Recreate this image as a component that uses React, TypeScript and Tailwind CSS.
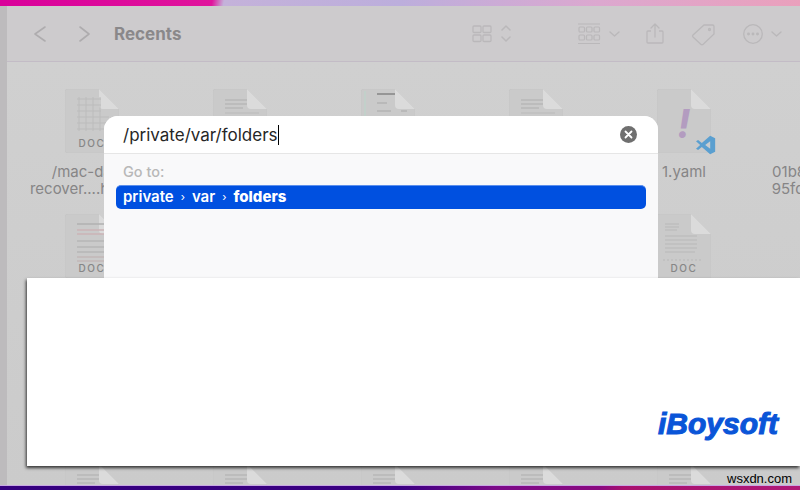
import React from "react";

type Kind = "table" | "lines" | "form" | "red" | "yaml" | "note";

const sans = "font-['Inter','Liberation_Sans',sans-serif]";

function Lines({ kind }: { kind: Kind }) {
  if (kind === "table") {
    return (
      <g stroke="#bcbcbc" strokeWidth="1" fill="none">
        <path d="M12 10H36M12 16H36M12 22H36M12 28H44M12 34H44M12 40H44" />
        <path d="M14 8V42M21 8V42M28 8V42M35 8V42" />
      </g>
    );
  }
  if (kind === "form") {
    return (
      <g fill="none">
        <path d="M4 2V40" stroke="#c2d0ca" strokeWidth="2" />
        <path d="M16 5H34" stroke="#969696" strokeWidth="2" />
        <path d="M16 14H26M16 22H30M40 22H46" stroke="#b4b4b4" strokeWidth="1.5" />
      </g>
    );
  }
  if (kind === "red") {
    return (
      <g fill="none" strokeWidth="1.5">
        <path d="M12 10H40" stroke="#b0b0b0" />
        <path d="M12 16H44M12 20H44" stroke="#cbb4b6" />
        <path d="M12 27H44M12 33H44M12 38H44" stroke="#b6b6b6" />
        <path d="M12 43H44M12 47H44" stroke="#c2b8b8" />
      </g>
    );
  }
  if (kind === "note") {
    return (
      <g fill="none" strokeWidth="1" stroke="#b8b8b8">
        <path d="M8 10H22M8 13H22M8 16H20M8 22H40M8 26H40M8 30H40M8 34H40M8 38H38" />
        <path d="M6 46H44" strokeDasharray="2 2" />
      </g>
    );
  }
  return (
    <g fill="none" strokeWidth="1.5" stroke="#b8b8b8">
      <path d="M12 11H34M12 15H34M12 19H30" />
      <path d="M12 24H46M12 28H46M12 33H46M12 37H40" stroke="#c0c0c0" />
    </g>
  );
}

function FileIcon({ kind }: { kind: Kind }) {
  return (
    <div className="relative h-[64px] w-[54px]">
      <svg viewBox="0 0 54 64" className="h-[64px] w-[54px]">
        <path d="M3 0H34L54 20V64H3Q0 64 0 61V3Q0 0 3 0Z" fill="#cacaca" stroke="#c6c6c6" />
        <path d="M34 0V16Q34 20 38 20H54Z" fill="#dbdbdb" />
        {kind !== "yaml" && <Lines kind={kind} />}
        {kind !== "yaml" && (
          <text x="27" y="58" textAnchor="middle" fontSize="10" fontWeight="500" letterSpacing="1.6" fill="#868686" fontFamily="Inter, sans-serif">
            DOC
          </text>
        )}
      </svg>
      {kind === "yaml" && (
        <>
          <span className={`absolute left-[20px] top-[17px] text-[40px] font-bold italic leading-[36px] text-[#b39cc0] ${sans}`}>!</span>
          <svg viewBox="0 0 24 24" className="absolute left-[38px] top-[46px] h-[20px] w-[22px] overflow-visible">
            <path d="M17 1 23 4V20L17 23 7 14.5 2.5 18 0 16.5 5 12 0 7.5 2.5 6 7 9.5Z" fill="#5a9fd0" />
            <path d="M17 7.5 11 12 17 16.5Z" fill="#c9cdd0" />
          </svg>
        </>
      )}
    </div>
  );
}

function Tile({ kind, label }: { kind: Kind; label?: string[] }) {
  return (
    <div className="flex h-[125px] flex-col items-center">
      <FileIcon kind={kind} />
      {label && (
        <div className="mt-[10px] whitespace-pre text-center text-[15px] leading-[17px] text-[#868586]">
          {label.map((l) => (
            <div key={l}>{l}</div>
          ))}
        </div>
      )}
    </div>
  );
}

const tiles: { kind: Kind; label?: string[] }[] = [
  { kind: "table", label: ["/mac-data-", "recover....html-vs"] },
  { kind: "lines" },
  { kind: "form" },
  { kind: "lines" },
  { kind: "yaml", label: ["1.yaml"] },
  { kind: "lines", label: ["01b8a4c76e92fd", "95fd3a21c0be84"] },
  { kind: "red" },
  { kind: "lines" },
  { kind: "lines" },
  { kind: "lines" },
  { kind: "note" },
  { kind: "lines" },
  { kind: "lines" },
  { kind: "lines" },
  { kind: "lines" },
  { kind: "lines" },
  { kind: "lines" },
  { kind: "lines" },
  { kind: "lines" },
  { kind: "lines" },
  { kind: "lines" },
  { kind: "lines" },
  { kind: "lines" },
  { kind: "lines" },
];

function Toolbar() {
  const c = "#bab8ba";
  return (
    <div className="flex h-[56px] shrink-0 items-center border-b border-[#c3bcc6] bg-[#cdcbcd] pl-[20px]">
      <svg width="20" height="20" viewBox="0 0 20 20" fill="none" stroke="#aeacae" strokeWidth="1.6" className="ml-[4px]">
        <path d="M14 3 4 10 14 17" strokeLinecap="round" strokeLinejoin="round" />
      </svg>
      <svg width="20" height="20" viewBox="0 0 20 20" fill="none" stroke="#aeacae" strokeWidth="1.6" className="ml-[23px]">
        <path d="M6 3 15 10 6 17" strokeLinecap="round" strokeLinejoin="round" />
      </svg>
      <span className={`ml-[20px] pt-[2px] text-[17px] font-bold text-[#8a888a] ${sans}`}>Recents</span>
      <svg width="40" height="20" viewBox="0 0 40 20" fill="none" stroke={c} strokeWidth="1.3" className="ml-[291px]">
        <rect x="1" y="2" width="8" height="6.5" rx="1" />
        <rect x="11" y="2" width="8" height="6.5" rx="1" />
        <rect x="1" y="11" width="8" height="6.5" rx="1" />
        <rect x="11" y="11" width="8" height="6.5" rx="1" />
        <path d="M30 6 34 2 38 6M30 13 34 17 38 13" strokeWidth="1.5" strokeLinecap="round" strokeLinejoin="round" />
      </svg>
      <svg width="42" height="22" viewBox="0 0 42 22" fill="none" stroke={c} strokeWidth="1.2" className="ml-[66px]">
        <path d="M0 1H22M0 20.5H22" />
        <rect x="1" y="4" width="5.5" height="5" rx="1" />
        <rect x="8.5" y="4" width="5.5" height="5" rx="1" />
        <rect x="16" y="4" width="5.5" height="5" rx="1" />
        <rect x="1" y="12" width="5.5" height="5" rx="1" />
        <rect x="8.5" y="12" width="5.5" height="5" rx="1" />
        <rect x="16" y="12" width="5.5" height="5" rx="1" />
        <path d="M32 9 36.5 13 41 9" strokeWidth="1.4" strokeLinecap="round" strokeLinejoin="round" />
      </svg>
      <svg width="20" height="22" viewBox="0 0 20 22" fill="none" stroke={c} strokeWidth="1.3" className="ml-[25px]">
        <path d="M6 8H3Q2 8 2 9V19Q2 20 3 20H17Q18 20 18 19V9Q18 8 17 8H14" />
        <path d="M10 14V2M6 5 10 1 14 5" strokeLinecap="round" strokeLinejoin="round" />
      </svg>
      <svg width="24" height="24" viewBox="0 0 24 24" fill="none" stroke={c} strokeWidth="1.3" className="ml-[26px]">
        <path d="M2 13 13 3H21.5Q23 3 23 4.5V12L12 22.5Q11 23 10 22.5L2 15Q1 14 2 13Z" />
        <circle cx="18.5" cy="7.5" r="1" />
      </svg>
      <svg width="40" height="20" viewBox="0 0 40 20" fill="none" stroke={c} strokeWidth="1.3" className="ml-[27px]">
        <circle cx="11" cy="10" r="9.3" />
        <circle cx="6.5" cy="10" r="0.8" fill={c} />
        <circle cx="11" cy="10" r="0.8" fill={c} />
        <circle cx="15.5" cy="10" r="0.8" fill={c} />
        <path d="M30 8 34.5 12 39 8" strokeWidth="1.4" strokeLinecap="round" strokeLinejoin="round" />
      </svg>
    </div>
  );
}

function Dialog() {
  return (
    <div className={`absolute left-[104px] top-[116px] h-[162px] w-[554px] overflow-hidden rounded-t-[14px] bg-[#f9f9fa] ${sans}`}>
      <div className="flex h-[38px] items-center justify-between border-b border-[#e6e6e6] bg-white pl-[19px] pr-[21px]">
        <div className="flex items-center text-[17px] leading-[20px] text-[#262626]">
          /private/var/folders
          <span className="h-[20px] w-px bg-black" />
        </div>
        <svg width="17" height="17" viewBox="0 0 17 17">
          <circle cx="8.5" cy="8.5" r="8.5" fill="#6f6f6f" />
          <path d="M5.5 5.5 11.5 11.5M11.5 5.5 5.5 11.5" stroke="#fff" strokeWidth="1.8" strokeLinecap="round" />
        </svg>
      </div>
      <div className="px-[12px] pt-[10px]">
        <div className="pl-[7px] text-[14.5px] font-medium leading-[16px] text-[#b8b8b8]">Go to:</div>
        <div className="mt-[5px] flex h-[24px] items-center rounded-[5px] border-t border-[#5c8fec] bg-[#0050e0] pl-[7px] text-[15px] text-white">
          <span className="font-semibold">private</span>
          <span className="mx-[7px] text-[11px]">›</span>
          <span className="font-semibold">var</span>
          <span className="mx-[7px] text-[11px]">›</span>
          <span className="font-extrabold">folders</span>
        </div>
      </div>
    </div>
  );
}

function Banner() {
  return (
    <div className="absolute left-[27px] top-[278px] flex h-[188px] w-[773px] items-end justify-end bg-white pb-[27px] pr-[22px] shadow-[-1px_2px_3px_rgba(0,0,0,0.75)]">
      <span className="font-['Liberation_Sans',sans-serif] text-[30px] font-bold italic leading-[30px] text-[#0a55d8] [-webkit-text-stroke:1.1px_#0a55d8]">
        iBoysoft
      </span>
    </div>
  );
}

export default function App() {
  return (
    <div className={`relative flex h-[490px] w-[800px] flex-col overflow-hidden bg-[#cfcfcf] ${sans}`}>
      <div className="h-[6px] shrink-0 bg-[linear-gradient(100deg,#d9009a_0%,#e0149c_26.5%,#c4b2da_28%,#bcaedc_50%,#dca8cf_75%,#eaa0bc_100%)]" />
      <div className="flex min-h-0 flex-1">
        <div className="w-[7px] shrink-0 bg-[#bdbbbd]" />
        <div className="flex min-w-0 flex-1 flex-col">
          <Toolbar />
          <div className="grid min-h-0 flex-1 grid-cols-[repeat(6,148px)] overflow-hidden bg-[linear-gradient(#d0d0d0,#cbcbcb)] pl-[11px] pt-[27px]">
            {tiles.map((t, i) => (
              <Tile key={i} kind={t.kind} label={t.label} />
            ))}
          </div>
        </div>
      </div>
      <div className="h-[5px] shrink-0 border-t border-[#c9a8e4] bg-[linear-gradient(90deg,#35007f_0%,#3b0082_50%,#7c0a88_62%,#8a0a80_75%,#a8106e_78%,#b01a78_100%)]" />
      <Dialog />
      <Banner />
      <span className="absolute left-[727px] top-[471px] font-['Liberation_Sans',sans-serif] text-[13px] leading-[15px] text-black">
        wsxdn.com
      </span>
    </div>
  );
}
